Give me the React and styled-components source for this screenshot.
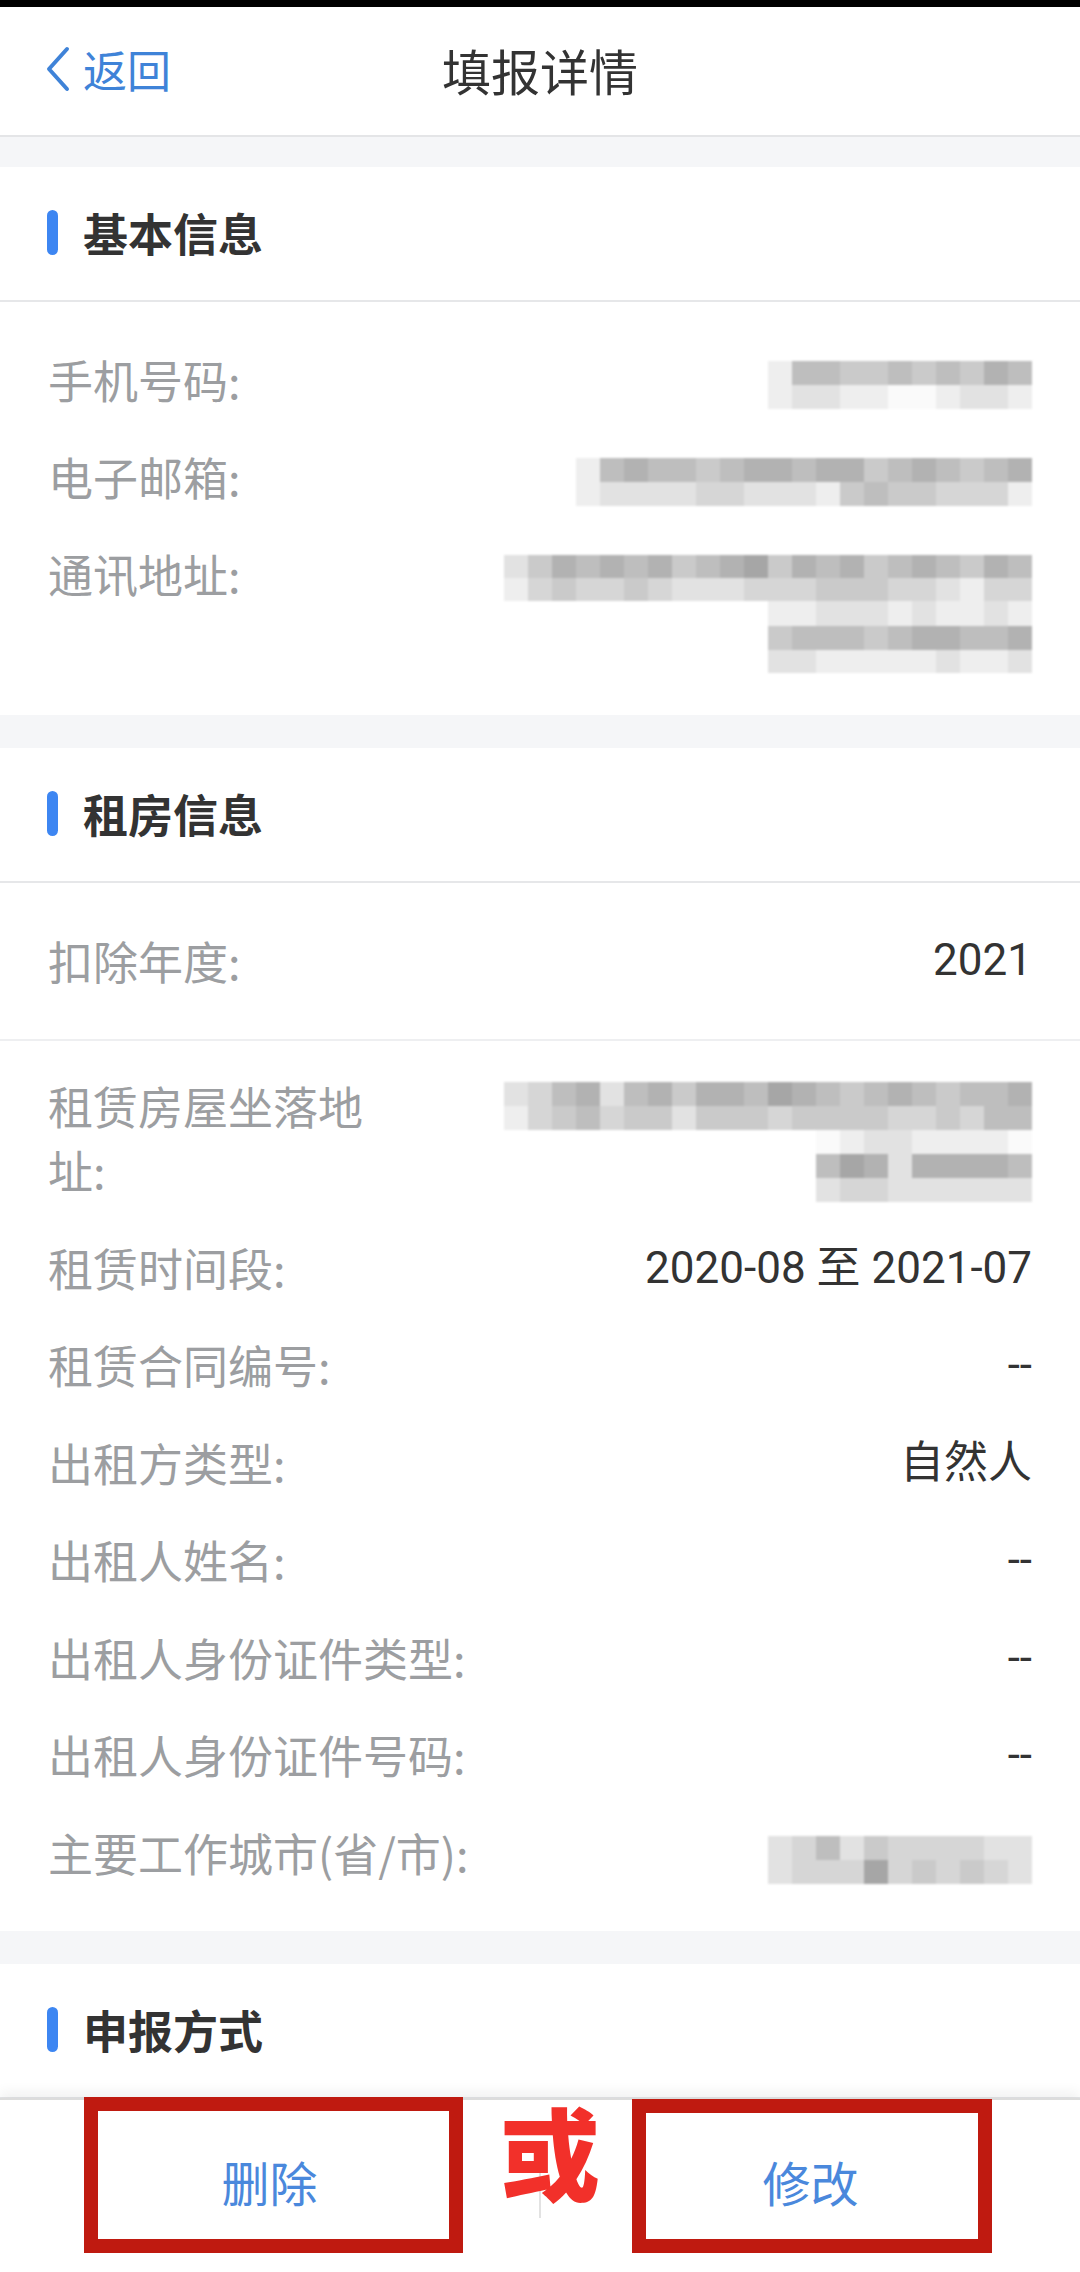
import React from "react";
import styled, { createGlobalStyle } from "styled-components";

const GlobalStyle = createGlobalStyle`
  html, body {
    margin: 0;
    padding: 0;
    background: #f5f6f8;
  }
  body {
    font-family: "Noto Sans CJK SC", "Noto Sans", sans-serif;
  }
  * {
    box-sizing: border-box;
  }
`;

const basicMosaic = {
  phone: [
    { h: 24, cells: "15544545465" },
    { h: 24, cells: "12211001221" },
  ],
  email: [
    { h: 24, cells: "1565545665664565456" },
    { h: 24, cells: "1222233222145443331" },
  ],
  address: [
    { h: 23, cells: "2465656456746564565465" },
    { h: 23, cells: "1343343222333444332133" },
    { h: 25, cells: "11222121121" },
    { h: 24, cells: "45554566556" },
    { h: 23, cells: "22111112112" },
  ],
};

const rentMosaic = {
  address: [
    { h: 24, cells: "2356256466576545654556" },
    { h: 24, cells: "1345344244434444334355" },
    { h: 24, cells: "012211110" },
    { h: 24, cells: "576266665" },
    { h: 24, cells: "233222222" },
  ],
  city: [
    { h: 24, cells: "23524333322" },
    { h: 24, cells: "23337343432" },
  ],
};

const rentFields = [
  { label: "租赁时间段:", value: "2020-08 至 2021-07" },
  { label: "租赁合同编号:", value: "--" },
  { label: "出租方类型:", value: "自然人" },
  { label: "出租人姓名:", value: "--" },
  { label: "出租人身份证件类型:", value: "--" },
  { label: "出租人身份证件号码:", value: "--" },
];

const Mosaic = ({ rows, top = 13 }) => (
  <MosaicBox style={{ marginTop: top }}>
    {rows.map((row, i) => (
      <MosaicRow key={i} $h={row.h}>
        {row.cells.split("").map((c, j) => (
          <Cell key={j} $shade={Number(c)} />
        ))}
      </MosaicRow>
    ))}
  </MosaicBox>
);

const Chevron = () => (
  <svg width="26" height="46" viewBox="0 0 26 46" fill="none">
    <polyline
      points="22,3 4,23 22,43"
      stroke="#3f83d8"
      strokeWidth="4"
      strokeLinecap="round"
      strokeLinejoin="round"
    />
  </svg>
);

const App = () => {
  return (
    <Page>
      <GlobalStyle />
      <StatusStrip />
      <NavBar>
        <BackButton>
          <Chevron />
          <span>返回</span>
        </BackButton>
        <NavTitle>填报详情</NavTitle>
        <span />
      </NavBar>

      <Content>
        <Card>
          <CardHead>
            <HeadMark />
            <HeadTitle>基本信息</HeadTitle>
          </CardHead>
          <FieldList $top={46} $bottom={42} $gap={33}>
            <Field>
              <Label>手机号码:</Label>
              <Mosaic rows={basicMosaic.phone} />
            </Field>
            <Field>
              <Label>电子邮箱:</Label>
              <Mosaic rows={basicMosaic.email} />
            </Field>
            <Field>
              <Label>通讯地址:</Label>
              <Mosaic rows={basicMosaic.address} />
            </Field>
          </FieldList>
        </Card>

        <Card>
          <CardHead>
            <HeadMark />
            <HeadTitle>租房信息</HeadTitle>
          </CardHead>
          <YearRow>
            <Label>扣除年度:</Label>
            <Value>2021</Value>
          </YearRow>
          <FieldList $top={33} $bottom={46} $gap={33.5}>
            <Field>
              <Label $narrow>租赁房屋坐落地址:</Label>
              <Mosaic rows={rentMosaic.address} top={8} />
            </Field>
            {rentFields.map((f) => (
              <Field key={f.label}>
                <Label>{f.label}</Label>
                <Value>{f.value}</Value>
              </Field>
            ))}
            <Field>
              <Label>主要工作城市(省/市):</Label>
              <Mosaic rows={rentMosaic.city} top={15} />
            </Field>
          </FieldList>
        </Card>

        <Card>
          <CardHead>
            <HeadMark />
            <HeadTitle>申报方式</HeadTitle>
          </CardHead>
        </Card>
      </Content>

      <ActionBar>
        <ActionButton>删除</ActionButton>
        <Divider />
        <ActionButton>修改</ActionButton>
        <MarkBox $left={84} $top={-3} $width={379} $height={156} />
        <MarkBox $left={632} $top={-1} $width={360} $height={154} />
        <OrMark>或</OrMark>
      </ActionBar>
    </Page>
  );
};

const Page = styled.div`
  display: flex;
  flex-direction: column;
  height: 100vh;
  overflow: hidden;
`;

const StatusStrip = styled.div`
  height: 7px;
  background: #000;
  flex-shrink: 0;
`;

const NavBar = styled.div`
  display: grid;
  grid-template-columns: 1fr auto 1fr;
  align-items: center;
  height: 130px;
  padding: 0 45px 4px;
  background: #fff;
  border-bottom: 2px solid #e4e5e7;
  flex-shrink: 0;
`;

const BackButton = styled.div`
  display: flex;
  align-items: center;
  gap: 12px;
  color: #3f83d8;
  font-size: 44px;
  line-height: 1;
`;

const NavTitle = styled.div`
  font-size: 49px;
  color: #333;
  line-height: 1;
`;

const Content = styled.div`
  flex: 1;
  overflow: hidden;
  display: flex;
  flex-direction: column;
  gap: 33px;
  padding-top: 30px;
`;

const Card = styled.div`
  background: #fff;
  flex-shrink: 0;
`;

const CardHead = styled.div`
  display: flex;
  align-items: center;
  gap: 25px;
  height: 135px;
  padding: 0 47px 2px;
  border-bottom: 2px solid #e6e7e9;
`;

const HeadMark = styled.span`
  width: 11px;
  height: 45px;
  border-radius: 6px;
  background: #3d86f2;
`;

const HeadTitle = styled.h2`
  margin: 0;
  font-size: 45px;
  font-weight: 700;
  color: #333;
  line-height: 1;
`;

const FieldList = styled.div`
  display: flex;
  flex-direction: column;
  gap: ${(p) => p.$gap}px;
  padding: ${(p) => p.$top}px 48px ${(p) => p.$bottom}px;
`;

const Field = styled.div`
  display: flex;
  justify-content: space-between;
  align-items: flex-start;
  gap: 24px;
  line-height: 64px;
`;

const Label = styled.div`
  font-size: 45px;
  color: #9c9ea1;
  white-space: ${(p) => (p.$narrow ? "normal" : "nowrap")};
  max-width: ${(p) => (p.$narrow ? "330px" : "none")};
`;

const Value = styled.div`
  font-family: Roboto, "Noto Sans CJK SC", sans-serif;
  font-size: 44px;
  color: #333;
  white-space: nowrap;
`;

const YearRow = styled.div`
  display: flex;
  justify-content: space-between;
  align-items: center;
  height: 158px;
  padding: 0 48px 2px;
  border-bottom: 2px solid #eeeff1;
`;

const MosaicBox = styled.div`
  display: flex;
  flex-direction: column;
  align-items: flex-end;
  filter: blur(1.2px);
`;

const MosaicRow = styled.div`
  display: flex;
  height: ${(p) => p.$h}px;
`;

const Cell = styled.span`
  width: 24px;
  height: 100%;
  background: ${(p) => {
    const g = 250 - p.$shade * 12;
    return `rgb(${g}, ${g}, ${g})`;
  }};
`;

const ActionBar = styled.div`
  position: relative;
  display: flex;
  align-items: center;
  height: 174px;
  padding-bottom: 10px;
  background: #fff;
  border-top: 2px solid #dcdcdc;
  box-shadow: 0 -6px 12px rgba(0, 0, 0, 0.06);
  flex-shrink: 0;
`;

const ActionButton = styled.div`
  flex: 1;
  text-align: center;
  font-size: 48px;
  color: #4a88dc;
  line-height: 1;
`;

const Divider = styled.span`
  width: 2px;
  height: 64px;
  margin-top: 10px;
  background: #e2e2e2;
`;

const MarkBox = styled.div`
  position: absolute;
  left: ${(p) => p.$left}px;
  top: ${(p) => p.$top}px;
  width: ${(p) => p.$width}px;
  height: ${(p) => p.$height}px;
  border: 14px solid #bf1a10;
`;

const OrMark = styled.span`
  position: absolute;
  left: 500px;
  top: 0;
  font-size: 100px;
  line-height: 100px;
  font-weight: 900;
  color: #f2302a;
`;

export default App;
